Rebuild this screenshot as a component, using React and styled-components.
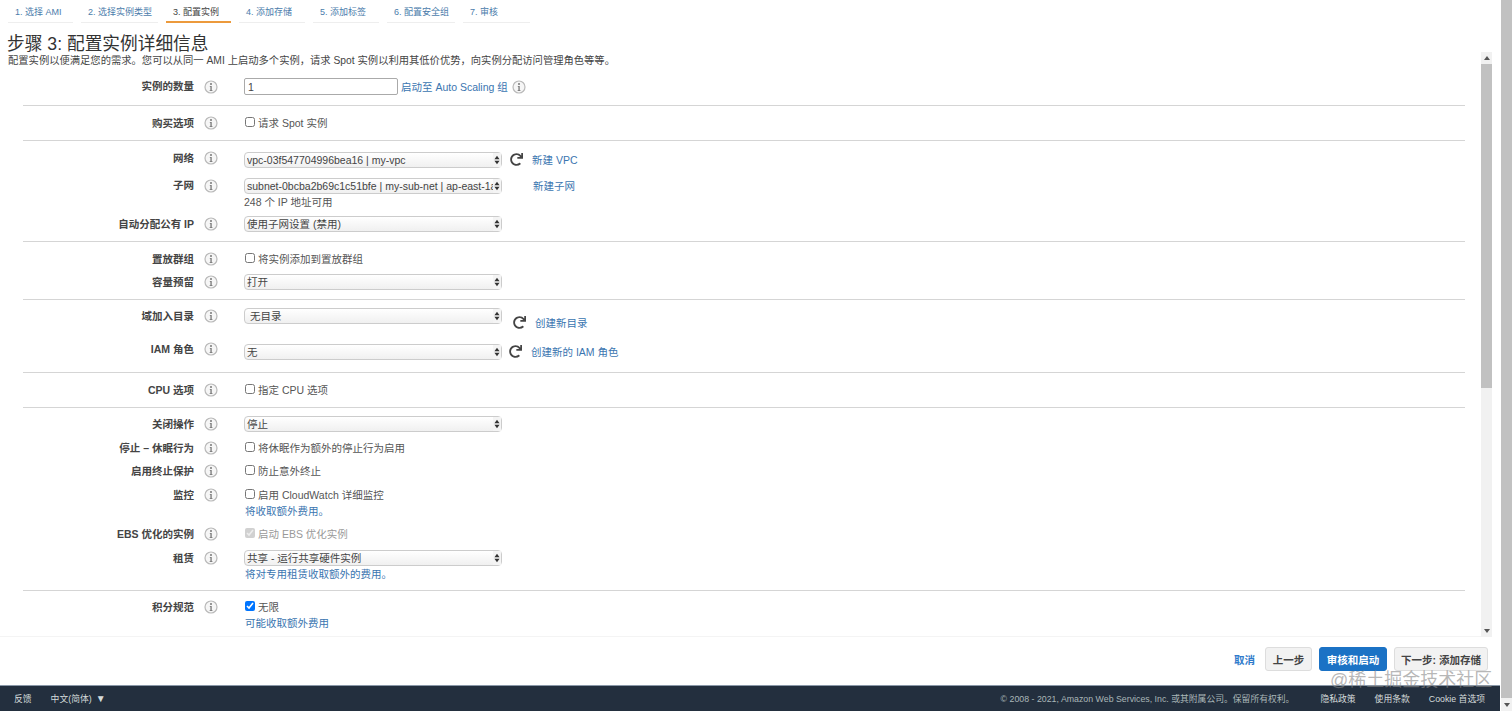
import React from "react";
import styled, { createGlobalStyle } from "styled-components";
import { FaRedo } from "react-icons/fa";

const GlobalStyle = createGlobalStyle`
  html, body {
    margin: 0;
    padding: 0;
    height: 100%;
    overflow: hidden;
    background: #fff;
  }
  body {
    font-family: "Liberation Sans", "Noto Sans CJK SC", sans-serif;
    font-size: 10.5px;
    color: #444;
  }
`;

const tabs = [
  { text: "1. 选择 AMI", w: 65 },
  { text: "2. 选择实例类型", w: 77 },
  { text: "3. 配置实例", w: 65, active: true },
  { text: "4. 添加存储", w: 66 },
  { text: "5. 添加标签", w: 66 },
  { text: "6. 配置安全组", w: 68 },
  { text: "7. 审核", w: 67 },
];

const InfoIcon = () => (
  <InfoSvg viewBox="0 0 14 14" aria-hidden="true">
    <circle cx="7" cy="7" r="6" fill="#f6f6f6" stroke="#b9b9b9" strokeWidth="1.2" />
    <circle cx="7" cy="4" r="1" fill="#777" />
    <path d="M5.8 6h1.9v4.2h.8v.8H5.6v-.8h.8V6.8h-.6z" fill="#777" />
  </InfoSvg>
);

const Arrows = () => (
  <ArrowSvg viewBox="0 0 7 11" aria-hidden="true">
    <path d="M3.5 0.5L6.5 4.5H0.5z M3.5 10.5L0.5 6.5H6.5z" fill="#333" />
  </ArrowSvg>
);

const SelectBox = ({ value, pad }) => (
  <SelectWrap>
    <Select $pad={pad} value={value} readOnly onChange={() => {}}>
      <option>{value}</option>
    </Select>
    <Arrows />
  </SelectWrap>
);

const Refresh = ({ left, down }) => (
  <RefreshIcon $left={left} $down={down}>
    <FaRedo size={13} />
  </RefreshIcon>
);

const Check = ({ text, checked, disabled }) => (
  <CheckLabel $disabled={disabled}>
    <input type="checkbox" defaultChecked={checked} disabled={disabled} />
    {text}
  </CheckLabel>
);

const Row = ({ label, h, top, shift, children }) => (
  <RowGrid $h={h} $top={top}>
    <Label $shift={shift}>{label}</Label>
    <InfoCell $shift={shift}>{label ? <InfoIcon /> : null}</InfoCell>
    <Control>{children}</Control>
  </RowGrid>
);

export default function App() {
  return (
    <Page>
      <GlobalStyle />
      <Main>
        <Content>
          <Tabs>
            {tabs.map((t) => (
              <Tab key={t.text} $w={t.w} $active={t.active}>
                {t.text}
              </Tab>
            ))}
          </Tabs>
          <Title>步骤 3: 配置实例详细信息</Title>
          <Panel>
            <Scroller>
              <Subtitle>
                配置实例以便满足您的需求。您可以从同一 AMI 上启动多个实例，请求 Spot 实例以利用其低价优势，向实例分配访问管理角色等等。
              </Subtitle>
              <Form>
                <Section>
                  <Row label="实例的数量" h={37}>
                    <NumberInput defaultValue="1" />
                    <InlineLink $gap={3}>启动至 Auto Scaling 组</InlineLink>
                    <TailInfo>
                      <InfoIcon />
                    </TailInfo>
                  </Row>
                </Section>
                <Section>
                  <Row label="购买选项" h={34}>
                    <Check text="请求 Spot 实例" />
                  </Row>
                </Section>
                <Section $pt={8} $pb={6}>
                  <Row label="网络" h={21} shift={3}>
                    <SelectBox value="vpc-03f547704996bea16 | my-vpc" />
                    <Refresh left={8} />
                    <InlineLink $gap={9}>新建 VPC</InlineLink>
                  </Row>
                  <Row label="子网" h={21} top={5}>
                    <SelectBox value="subnet-0bcba2b69c1c51bfe | my-sub-net | ap-east-1a" />
                    <InlineLink $gap={31}>新建子网</InlineLink>
                  </Row>
                  <Row h={12}>
                    <Hint>248 个 IP 地址可用</Hint>
                  </Row>
                  <Row label="自动分配公有 IP" h={22} top={5}>
                    <SelectBox value="使用子网设置 (禁用)" />
                  </Row>
                </Section>
                <Section $pt={7} $pb={7}>
                  <Row label="置放群组" h={20}>
                    <Check text="将实例添加到置放群组" />
                  </Row>
                  <Row label="容量预留" h={20} top={3}>
                    <SelectBox value="打开" />
                  </Row>
                </Section>
                <Section $pt={6} $pb={10}>
                  <Row label="域加入目录" h={20}>
                    <SelectBox value="无目录" pad={5} />
                    <Refresh left={11} down={6} />
                    <InlineLink $gap={9} $down={6}>创建新目录</InlineLink>
                  </Row>
                  <Row label="IAM 角色" h={21} top={15} shift={5}>
                    <SelectBox value="无" />
                    <Refresh left={7} />
                    <InlineLink $gap={9}>创建新的 IAM 角色</InlineLink>
                  </Row>
                </Section>
                <Section>
                  <Row label="CPU 选项" h={34}>
                    <Check text="指定 CPU 选项" />
                  </Row>
                </Section>
                <Section $pt={6} $pb={10}>
                  <Row label="关闭操作" h={20}>
                    <SelectBox value="停止" />
                  </Row>
                  <Row label="停止 – 休眠行为" h={20} top={4}>
                    <Check text="将休眠作为额外的停止行为启用" />
                  </Row>
                  <Row label="启用终止保护" h={20} top={3}>
                    <Check text="防止意外终止" />
                  </Row>
                  <Row label="监控" h={20} top={4}>
                    <Check text="启用 CloudWatch 详细监控" />
                  </Row>
                  <Row h={12}>
                    <SubLink>将收取额外费用。</SubLink>
                  </Row>
                  <Row label="EBS 优化的实例" h={20} top={7}>
                    <Check text="启动 EBS 优化实例" checked disabled />
                  </Row>
                  <Row label="租赁" h={20} top={4}>
                    <SelectBox value="共享 - 运行共享硬件实例" />
                  </Row>
                  <Row h={12}>
                    <SubLink>将对专用租赁收取额外的费用。</SubLink>
                  </Row>
                </Section>
                <Section $pt={6} $last>
                  <Row label="积分规范" h={20}>
                    <Check text="无限" checked />
                  </Row>
                  <Row h={12}>
                    <SubLink>可能收取额外费用</SubLink>
                  </Row>
                </Section>
              </Form>
            </Scroller>
            <InnerBar>
              <BarArrow $up />
              <BarThumb />
              <BarTrack />
              <BarArrow />
            </InnerBar>
          </Panel>
          <ActionBar>
            <CancelLink>取消</CancelLink>
            <Button $w={47}>上一步</Button>
            <Button $w={68} $primary>审核和启动</Button>
            <Button $w={94}>下一步: 添加存储</Button>
          </ActionBar>
          <Footer>
            <FooterGroup>
              <span>反馈</span>
              <Lang>
                中文(简体)
                <LangArrow>▼</LangArrow>
              </Lang>
            </FooterGroup>
            <FooterGroup>
              <Copyright>© 2008 - 2021, Amazon Web Services, Inc. 或其附属公司。保留所有权利。</Copyright>
              <span>隐私政策</span>
              <span>使用条款</span>
              <span>Cookie 首选项</span>
            </FooterGroup>
          </Footer>
        </Content>
        <PageBar>
          <PageThumb />
          <BarArrow $wide />
        </PageBar>
      </Main>
      <Watermark>@稀土掘金技术社区</Watermark>
    </Page>
  );
}

const Page = styled.div`
  position: relative;
  width: 1512px;
  height: 711px;
  overflow: hidden;
  background: #fff;
`;

const Main = styled.div`
  display: flex;
  height: 100%;
`;

const Content = styled.div`
  flex: 1;
  min-width: 0;
  display: flex;
  flex-direction: column;
`;

const Tabs = styled.div`
  display: flex;
  gap: 8px;
  height: 23px;
  padding-left: 8px;
  box-sizing: border-box;
`;

const Tab = styled.div`
  width: ${(p) => p.$w}px;
  box-sizing: border-box;
  padding: 7px 0 0 7px;
  font-size: 9px;
  line-height: 11px;
  white-space: nowrap;
  color: ${(p) => (p.$active ? "#444" : "#4b7cab")};
  border-bottom: ${(p) => (p.$active ? "2px solid #ec9a3c" : "1px solid #eee")};
`;

const Title = styled.h1`
  margin: 0;
  height: 29px;
  padding: 11px 0 0 7px;
  box-sizing: border-box;
  font-size: 17.7px;
  line-height: 20px;
  font-weight: 400;
  color: #333;
  white-space: nowrap;
`;

const Panel = styled.div`
  flex: 1;
  min-height: 0;
  display: flex;
  padding-right: 8px;
`;

const Scroller = styled.div`
  flex: 1;
  min-width: 0;
  overflow: hidden;
  border-bottom: 1px solid #f4f4f4;
`;

const Subtitle = styled.p`
  margin: 0;
  height: 16px;
  padding: 1px 0 0 8px;
  box-sizing: border-box;
  font-size: 10.3px;
  line-height: 15px;
  color: #444;
  white-space: nowrap;
`;

const Form = styled.div`
  margin-left: 23px;
  width: 1442px;
`;

const Section = styled.div`
  padding: ${(p) => p.$pt || 0}px 0 ${(p) => p.$pb || 0}px;
  border-bottom: ${(p) => (p.$last ? "none" : "1px solid #d5d5d5")};
`;

const RowGrid = styled.div`
  display: grid;
  grid-template-columns: 171px 50px 1fr;
  align-items: center;
  height: ${(p) => p.$h}px;
  margin-top: ${(p) => p.$top || 0}px;
`;

const Label = styled.div`
  text-align: right;
  font-weight: 700;
  font-size: 10.5px;
  line-height: 14px;
  color: #444;
  white-space: nowrap;
  margin-bottom: ${(p) => p.$shift || 1}px;
`;

const InfoCell = styled.div`
  display: flex;
  padding-left: 10px;
  margin-bottom: ${(p) => p.$shift || 0}px;
`;

const InfoSvg = styled.svg`
  width: 14px;
  height: 14px;
  display: block;
`;

const TailInfo = styled.span`
  display: flex;
  margin-left: 4px;
`;

const Control = styled.div`
  display: flex;
  align-items: center;
  min-width: 0;
`;

const NumberInput = styled.input`
  width: 154px;
  height: 17px;
  box-sizing: border-box;
  padding: 0 3px;
  border: 1px solid #aaa;
  border-radius: 2px;
  font: 10.5px "Liberation Sans", sans-serif;
  color: #444;
  outline: none;
`;

const SelectWrap = styled.div`
  position: relative;
  width: 258px;
  height: 16px;
  flex: none;
`;

const Select = styled.select`
  appearance: none;
  display: block;
  width: 100%;
  height: 100%;
  box-sizing: border-box;
  padding: 0 4px 0 ${(p) => p.$pad || 2}px;
  border: 1px solid #ccc;
  border-radius: 4px;
  background: linear-gradient(#fff, #f0f0f0);
  font: 10.5px "Liberation Sans", "Noto Sans CJK SC", sans-serif;
  color: #444;
  outline: none;
`;

const ArrowSvg = styled.svg`
  position: absolute;
  right: 1px;
  top: 1px;
  width: 8px;
  height: 14px;
  padding: 1.5px 1px;
  box-sizing: border-box;
  background: #f4f4f4;
`;

const RefreshIcon = styled.span`
  display: flex;
  color: #444;
  margin-left: ${(p) => p.$left}px;
  transform: translateY(${(p) => p.$down || 0}px);
`;

const InlineLink = styled.a`
  color: #3a75b0;
  font-size: 10.5px;
  margin-left: ${(p) => p.$gap}px;
  white-space: nowrap;
  transform: translateY(${(p) => p.$down || 0}px);
`;

const SubLink = styled.a`
  color: #3a75b0;
  font-size: 10.5px;
  line-height: 12px;
  margin-left: 1px;
  white-space: nowrap;
`;

const Hint = styled.span`
  font-size: 10.5px;
  line-height: 12px;
  color: #555;
  white-space: nowrap;
`;

const CheckLabel = styled.label`
  display: flex;
  align-items: center;
  gap: 3px;
  padding-left: 1px;
  margin-bottom: 1px;
  color: ${(p) => (p.$disabled ? "#999" : "#555")};
  font-size: 10.5px;
  white-space: nowrap;

  input {
    width: 10px;
    height: 10px;
    margin: 0 0 1px;
  }
`;

const InnerBar = styled.div`
  width: 11px;
  flex: none;
  display: flex;
  flex-direction: column;
  background: #f1f1f1;
`;

const BarArrow = styled.div`
  flex: none;
  height: ${(p) => (p.$wide ? 13 : 12)}px;
  display: flex;
  align-items: center;
  justify-content: center;
  background: ${(p) => (p.$wide ? "#f1f1f1" : "transparent")};

  &::after {
    content: "";
    border-left: 3px solid transparent;
    border-right: 3px solid transparent;
    ${(p) => (p.$up ? "border-bottom: 4px solid #555;" : "border-top: 4px solid #555;")}
  }
`;

const BarThumb = styled.div`
  height: 324px;
  flex: none;
  background: #c1c1c1;
`;

const BarTrack = styled.div`
  flex: 1;
`;

const PageBar = styled.div`
  width: 11px;
  margin-left: 1px;
  flex: none;
  display: flex;
  flex-direction: column;
`;

const PageThumb = styled.div`
  flex: 1;
  background: #c1c1c1;
`;

const ActionBar = styled.div`
  height: 48px;
  flex: none;
  display: flex;
  align-items: center;
  justify-content: flex-end;
  gap: 7px;
  padding: 0 12px 4px 0;
  box-sizing: border-box;
`;

const CancelLink = styled.a`
  color: #2f7bcb;
  font-weight: 700;
  font-size: 10.5px;
  margin-right: 3px;
`;

const Button = styled.button`
  width: ${(p) => p.$w}px;
  height: 24px;
  padding: 0;
  border: 1px solid ${(p) => (p.$primary ? "#1b72c5" : "#ddd")};
  border-radius: 3px;
  background: ${(p) => (p.$primary ? "#1b72c5" : "#f2f2f2")};
  color: ${(p) => (p.$primary ? "#fff" : "#444")};
  font: 700 10.5px "Liberation Sans", "Noto Sans CJK SC", sans-serif;
  white-space: nowrap;
`;

const Footer = styled.div`
  height: 26px;
  flex: none;
  display: flex;
  align-items: center;
  justify-content: space-between;
  padding: 0 15px 0 14px;
  box-sizing: border-box;
  background: #232f3e;
  border-top: 1px solid #8a98a8;
  color: #d5dbdb;
  font-size: 8.8px;
`;

const FooterGroup = styled.div`
  display: flex;
  align-items: center;
  gap: 19px;
  white-space: nowrap;
`;

const Lang = styled.span`
  display: flex;
  align-items: center;
  gap: 4px;
`;

const LangArrow = styled.span`
  font-size: 10px;
`;

const Copyright = styled.span`
  margin-right: 7px;
  color: #aab7b8;
`;

const Watermark = styled.div`
  position: absolute;
  left: 1330px;
  top: 669px;
  font-size: 18px;
  line-height: 22px;
  color: rgba(135, 135, 135, 0.6);
  white-space: nowrap;
  pointer-events: none;
`;
